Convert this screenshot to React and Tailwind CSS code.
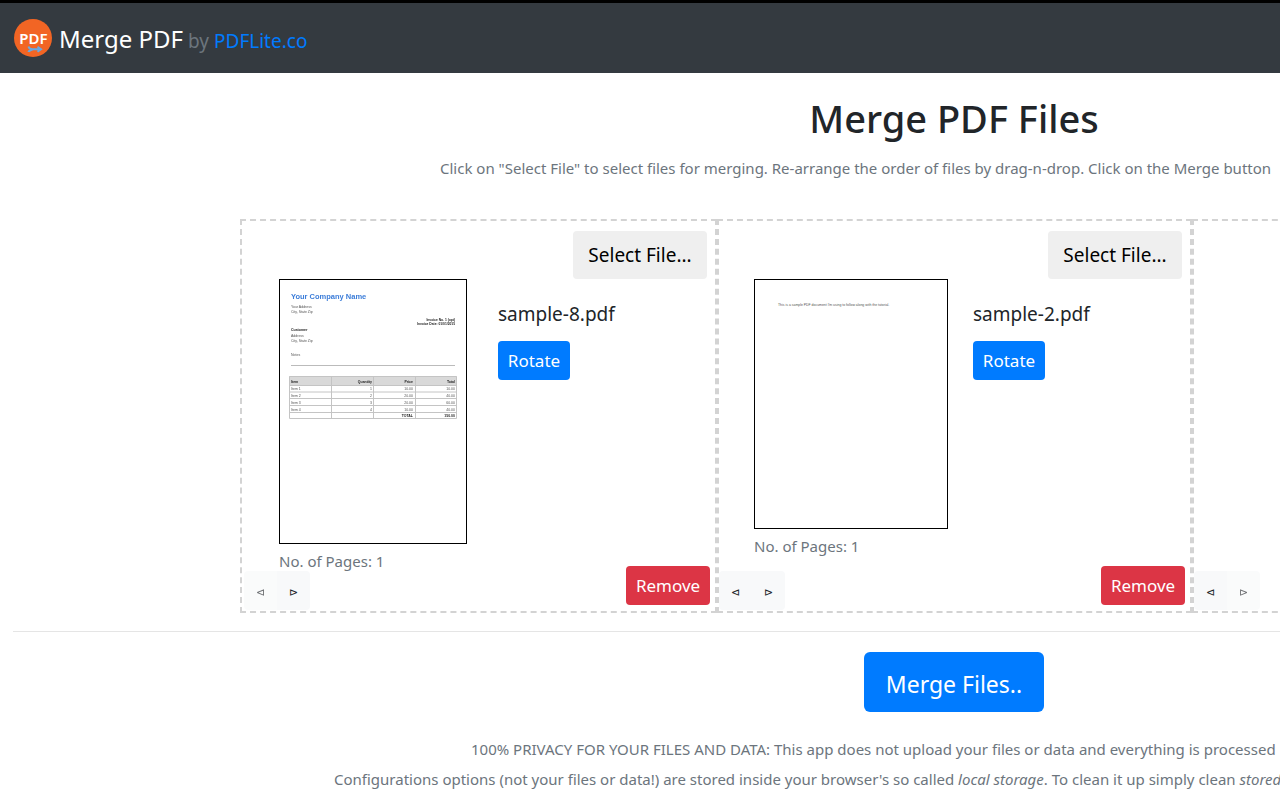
import React, { useState } from 'react'

const INITIAL_FILES = [
  { id: 1, name: 'sample-8.pdf', pages: 1, preview: 'invoice' },
  { id: 2, name: 'sample-2.pdf', pages: 1, preview: 'plain' },
  { id: 3, name: '', pages: 0, preview: null },
]

const INVOICE_ROWS = [
  ['Item 1', '1', '10.00', '10.00'],
  ['Item 2', '2', '20.00', '40.00'],
  ['Item 3', '3', '20.00', '60.00'],
  ['Item 4', '4', '10.00', '40.00'],
]

function Logo() {
  return (
    <svg className="h-10 w-10 shrink-0" viewBox="0 0 40 40" aria-hidden="true">
      <circle cx="20" cy="20" r="19" fill="#f26524" />
      <text
        x="20.5"
        y="25.5"
        textAnchor="middle"
        fill="#fff"
        fontFamily="Noto Sans, sans-serif"
        fontWeight="600"
        fontSize="15"
      >
        PDF
      </text>
      <path
        d="M15.5 28.500c.5 2 2 2.700 4 2.700s-3.500.7-4 2.800M19 31.200h8.500M24.500 28.700l3.500 2.500-3.500 2.500"
        fill="none"
        stroke="#6aa9e0"
        strokeWidth="2"
      />
    </svg>
  )
}

function InvoicePreview() {
  return (
    <svg
      className="h-[265px] w-[188px] border border-black bg-white"
      viewBox="0 0 186 263"
      fontFamily="Liberation Sans, sans-serif"
      fontSize="3.5"
      fill="#555"
    >
      <filter id="soften">
        <feGaussianBlur stdDeviation="0.4" />
      </filter>
      <g filter="url(#soften)">
        <text x="11" y="19" fontSize="7.5" fontWeight="700" fill="#3c7dd9">Your Company Name</text>
        <text x="11" y="28">Your Address</text>
        <text x="11" y="33">City, State Zip</text>
        <g textAnchor="end" fontWeight="700" fontSize="3.3" fill="#222">
          <text x="175" y="40.500">Invoice No. 1 (opt)</text>
          <text x="175" y="44.500">Invoice Date: 01/01/2015</text>
        </g>
        <text x="11" y="51" fontWeight="700" fill="#111">Customer</text>
        <text x="11" y="57">Address</text>
        <text x="11" y="62">City, State Zip</text>
        <text x="11" y="76">Notes</text>
      </g>
      <path d="M11 85.500h164" stroke="#bbb" strokeWidth="1" />

      {/* Items table */}
      <rect x="9" y="96" width="168" height="9" fill="#d9d9d9" />
      <path
        d="M9.500 96.500h167v42h-167zM9.500 105.500h167M9.500 112h167M9.500 118.500h167M9.500 125.500h167M9.500 132.500h167M51.500 96.500v42M93.500 96.500v42M135.500 96.500v42"
        fill="none"
        stroke="#c4c4c4"
        strokeWidth="1"
      />
      <g filter="url(#soften)">
        <g fontWeight="700" fill="#222">
          <text x="11" y="102.500">Item</text>
          <text x="92" y="102.500" textAnchor="end">Quantity</text>
          <text x="133" y="102.500" textAnchor="end">Price</text>
          <text x="175" y="102.500" textAnchor="end">Total</text>
          <text x="133" y="136.500" textAnchor="end">TOTAL</text>
          <text x="175" y="136.500" textAnchor="end">150.00</text>
        </g>
        {INVOICE_ROWS.map(([item, qty, price, total], i) => (
          <g key={item}>
            <text x="11" y={110 + i * 7}>{item}</text>
            <text x="92" y={110 + i * 7} textAnchor="end">{qty}</text>
            <text x="133" y={110 + i * 7} textAnchor="end">{price}</text>
            <text x="175" y={110 + i * 7} textAnchor="end">{total}</text>
          </g>
        ))}
      </g>
    </svg>
  )
}

function PlainPreview() {
  return (
    <svg
      className="h-[250px] w-[194px] border border-black bg-white"
      viewBox="0 0 192 248"
      fontFamily="Liberation Sans, sans-serif"
      fontSize="3.45"
      fill="#555"
    >
      <text x="23" y="26">This is a sample PDF document I&apos;m using to follow along with the tutorial.</text>
    </svg>
  )
}

function MoveButton({ label, disabled, onClick, children }) {
  return (
    <button
      aria-label={label}
      disabled={disabled}
      onClick={onClick}
      className="h-[39px] w-[33px] bg-[#f8f9fa] pt-1.5 font-['DejaVu_Sans',sans-serif] text-[11px] text-[#212529] first:rounded-l last:rounded-r disabled:opacity-65"
    >
      {children}
    </button>
  )
}

function FileCard({ file, isFirst, isLast, onMove, onRemove }) {
  return (
    <li className="flex h-[394px] w-[475px] shrink-0 flex-col border-2 border-dashed border-[#d3d3d3] first:w-[477px] first:pl-0.5">
      {file.name ? (
        <>
          <div className="flex justify-end pt-2.5 pr-2">
            <button className="h-12 w-[134px] rounded bg-[#efefef] text-[19px] text-black">Select File...</button>
          </div>
          <div className="flex flex-1 pl-[35px]">
            <div className="w-[219px] shrink-0">
              {file.preview === 'invoice' ? <InvoicePreview /> : <PlainPreview />}
              <p className="mt-[5px] text-[15px] leading-6 text-[#6c757d]">No. of Pages: {file.pages}</p>
            </div>
            <div className="pt-5">
              <p className="mb-3 text-[19px] leading-[30px]">{file.name}</p>
              <button className="h-[39px] w-[72px] rounded bg-[#007bff] text-[17px] text-white">Rotate</button>
            </div>
          </div>
        </>
      ) : (
        <div className="flex-1" />
      )}
      <div className="-mt-11 flex items-end justify-between pr-[5px] pb-px">
        <div className="flex">
          <MoveButton label="Move left" disabled={isFirst} onClick={() => onMove(file.id, -1)}>⊲</MoveButton>
          <MoveButton label="Move right" disabled={isLast} onClick={() => onMove(file.id, 1)}>⊳</MoveButton>
        </div>
        {file.name && (
          <button
            onClick={() => onRemove(file.id)}
            className="mb-[5px] h-[39px] w-[84px] rounded bg-[#dc3545] text-[17px] text-white"
          >
            Remove
          </button>
        )}
      </div>
    </li>
  )
}

export default function App() {
  const [files, setFiles] = useState(INITIAL_FILES)

  const moveFile = (id, step) => {
    const from = files.findIndex((f) => f.id === id)
    const next = [...files]
    const [file] = next.splice(from, 1)
    next.splice(from + step, 0, file)
    setFiles(next)
  }

  const removeFile = (id) => setFiles(files.filter((f) => f.id !== id))

  return (
    <div className="h-screen overflow-hidden bg-white font-['Noto_Sans',sans-serif] text-[#212529]">
      <div className="min-w-[1908px]">
        {/* Navbar */}
        <header className="flex h-[73px] items-center border-t-[3px] border-black bg-[#343a40] px-[13px]">
          <Logo />
          <div className="ml-1.5 flex items-baseline gap-[5px] pt-0.5 text-[19px]">
            <span className="text-2xl text-white">Merge PDF</span>
            <span className="text-[#6c757d]">by</span>
            <a href="#" className="text-[#007bff]">PDFLite.co</a>
          </div>
        </header>

        <main className="px-[13px]">
          <h1 className="pt-5 text-center text-[38px] leading-[50px] font-medium">Merge PDF Files</h1>
          <p className="mx-auto mt-2.5 w-[1028px] text-[15px] leading-[30px] whitespace-nowrap text-[#6c757d]">
            Click on &quot;Select File&quot; to select files for merging. Re-arrange the order of files by drag-n-drop. Click on the Merge button
          </p>

          {/* File cards */}
          <ul className="mx-auto mt-9 flex w-[1428px]">
            {files.map((file, i) => (
              <FileCard
                key={file.id}
                file={file}
                isFirst={i === 0}
                isLast={i === files.length - 1}
                onMove={moveFile}
                onRemove={removeFile}
              />
            ))}
          </ul>

          <hr className="mt-[18px] border-[#e5e5e5]" />

          <div className="mt-5 text-center">
            <button className="h-[60px] w-[180px] rounded-md bg-[#007bff] pt-1 text-[23px] text-white">Merge Files..</button>
          </div>

          <div className="mt-[22px] text-[15px] leading-[30px] whitespace-nowrap text-[#6c757d]">
            <p className="mx-auto w-[966px]">
              100% PRIVACY FOR YOUR FILES AND DATA: This app does not upload your files or data and everything is processed
            </p>
            <p className="mx-auto w-[1240px]">
              Configurations options (not your files or data!) are stored inside your browser&apos;s so called <i>local storage</i>. To clean it up simply clean <i>stored</i>
            </p>
          </div>
        </main>
      </div>
    </div>
  )
}
